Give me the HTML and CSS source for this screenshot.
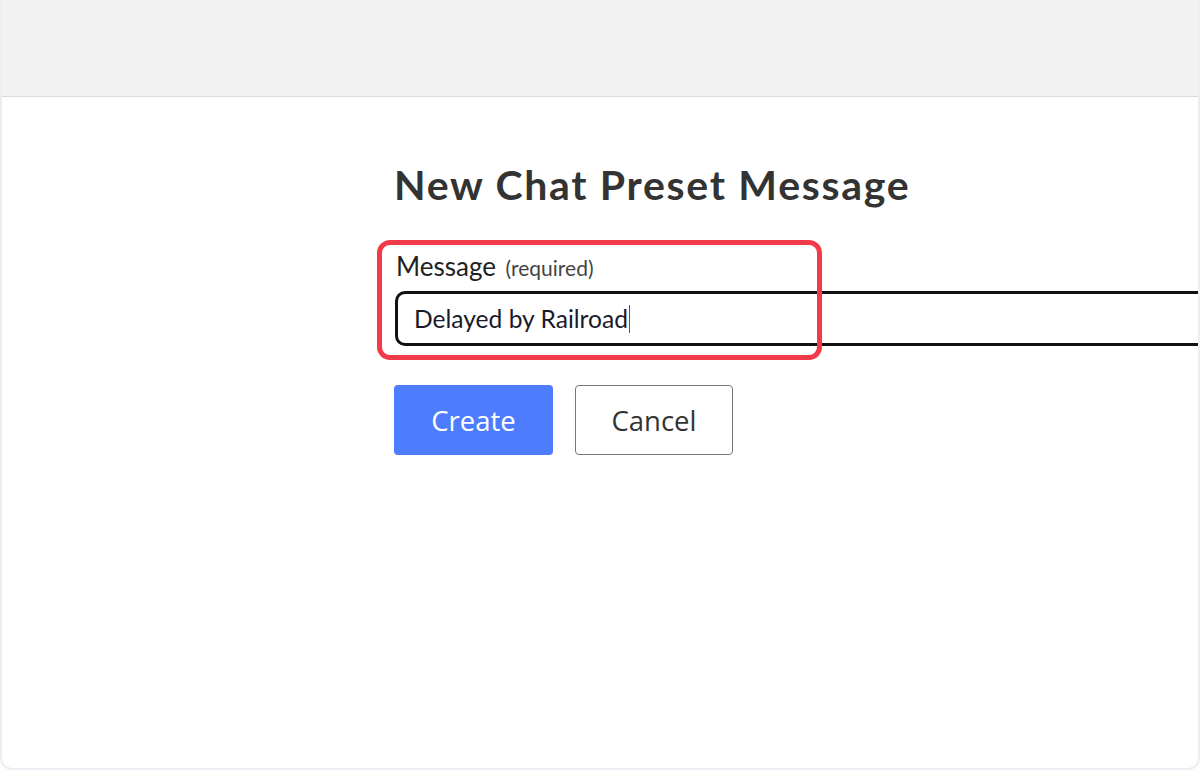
FILE: index.html
```html
<!DOCTYPE html>
<html>
<head>
<meta charset="utf-8">
<link rel="stylesheet" href="styles.css">
</head>
<body>
<div class="frame">
  <div class="topbar"></div>
  <main class="content">
    <h1 class="title">New Chat Preset Message</h1>
    <div class="field">
      <label class="label">Message <span class="req">(required)</span></label>
      <div class="input"><span class="value">Delayed by Railroad</span><span class="caret"></span></div>
      <div class="highlight"></div>
    </div>
    <div class="actions">
      <button class="btn btn-primary">Create</button>
      <button class="btn btn-secondary">Cancel</button>
    </div>
  </main>
</div>
</body>
</html>
```

FILE: styles.css
```css
html, body {
  margin: 0;
  padding: 0;
  background: #ffffff;
}
.frame {
  width: 1200px;
  height: 770px;
  box-sizing: border-box;
  border: 2px solid #ededf3;
  border-top: none;
  border-radius: 0 0 12px 12px;
  overflow: hidden;
  background: #ffffff;
}
.topbar {
  height: 96px;
  background: #f2f2f2;
  border-bottom: 1px solid #dcdcdc;
}
.content {
  padding: 64px 0 0 392px;
  font-family: "Lato", "Liberation Sans", sans-serif;
  color: #333333;
}
.title {
  margin: 0;
  font-size: 41px;
  line-height: 48px;
  font-weight: 700;
  letter-spacing: 1.7px;
  color: #333333;
  white-space: nowrap;
}
.field {
  position: relative;
  margin-top: 41px;
}
.label {
  display: block;
  font-size: 26px;
  line-height: 32px;
  color: #222222;
  padding-left: 2px;
}
.req {
  font-size: 21px;
  color: #444444;
  margin-left: 3px;
}
.input {
  margin-top: 7px;
  margin-left: 1px;
  width: 900px;
  height: 55px;
  box-sizing: border-box;
  border: 3px solid #111111;
  border-radius: 10px;
  display: flex;
  align-items: center;
  padding-left: 16px;
  font-size: 24.6px;
  color: #1a1a2a;
}
.caret {
  display: inline-block;
  width: 1px;
  height: 28px;
  background: #555555;
  margin-left: 1px;
}
.highlight {
  position: absolute;
  left: -17px;
  top: -10px;
  width: 445px;
  height: 120px;
  box-sizing: border-box;
  border: 5px solid #f33a4b;
  border-radius: 13px;
}
.actions {
  display: flex;
  gap: 22px;
  margin-top: 39px;
}
.btn {
  font-family: "Open Sans", "Noto Sans", sans-serif;
  font-size: 27.5px;
  height: 70px;
  border-radius: 4px;
  box-sizing: border-box;
  cursor: pointer;
}
.btn-primary {
  width: 159px;
  background: #4d7cfe;
  border: none;
  color: #ffffff;
}
.btn-secondary {
  width: 158px;
  background: #ffffff;
  border: 1px solid #777777;
  color: #333333;
}
```
